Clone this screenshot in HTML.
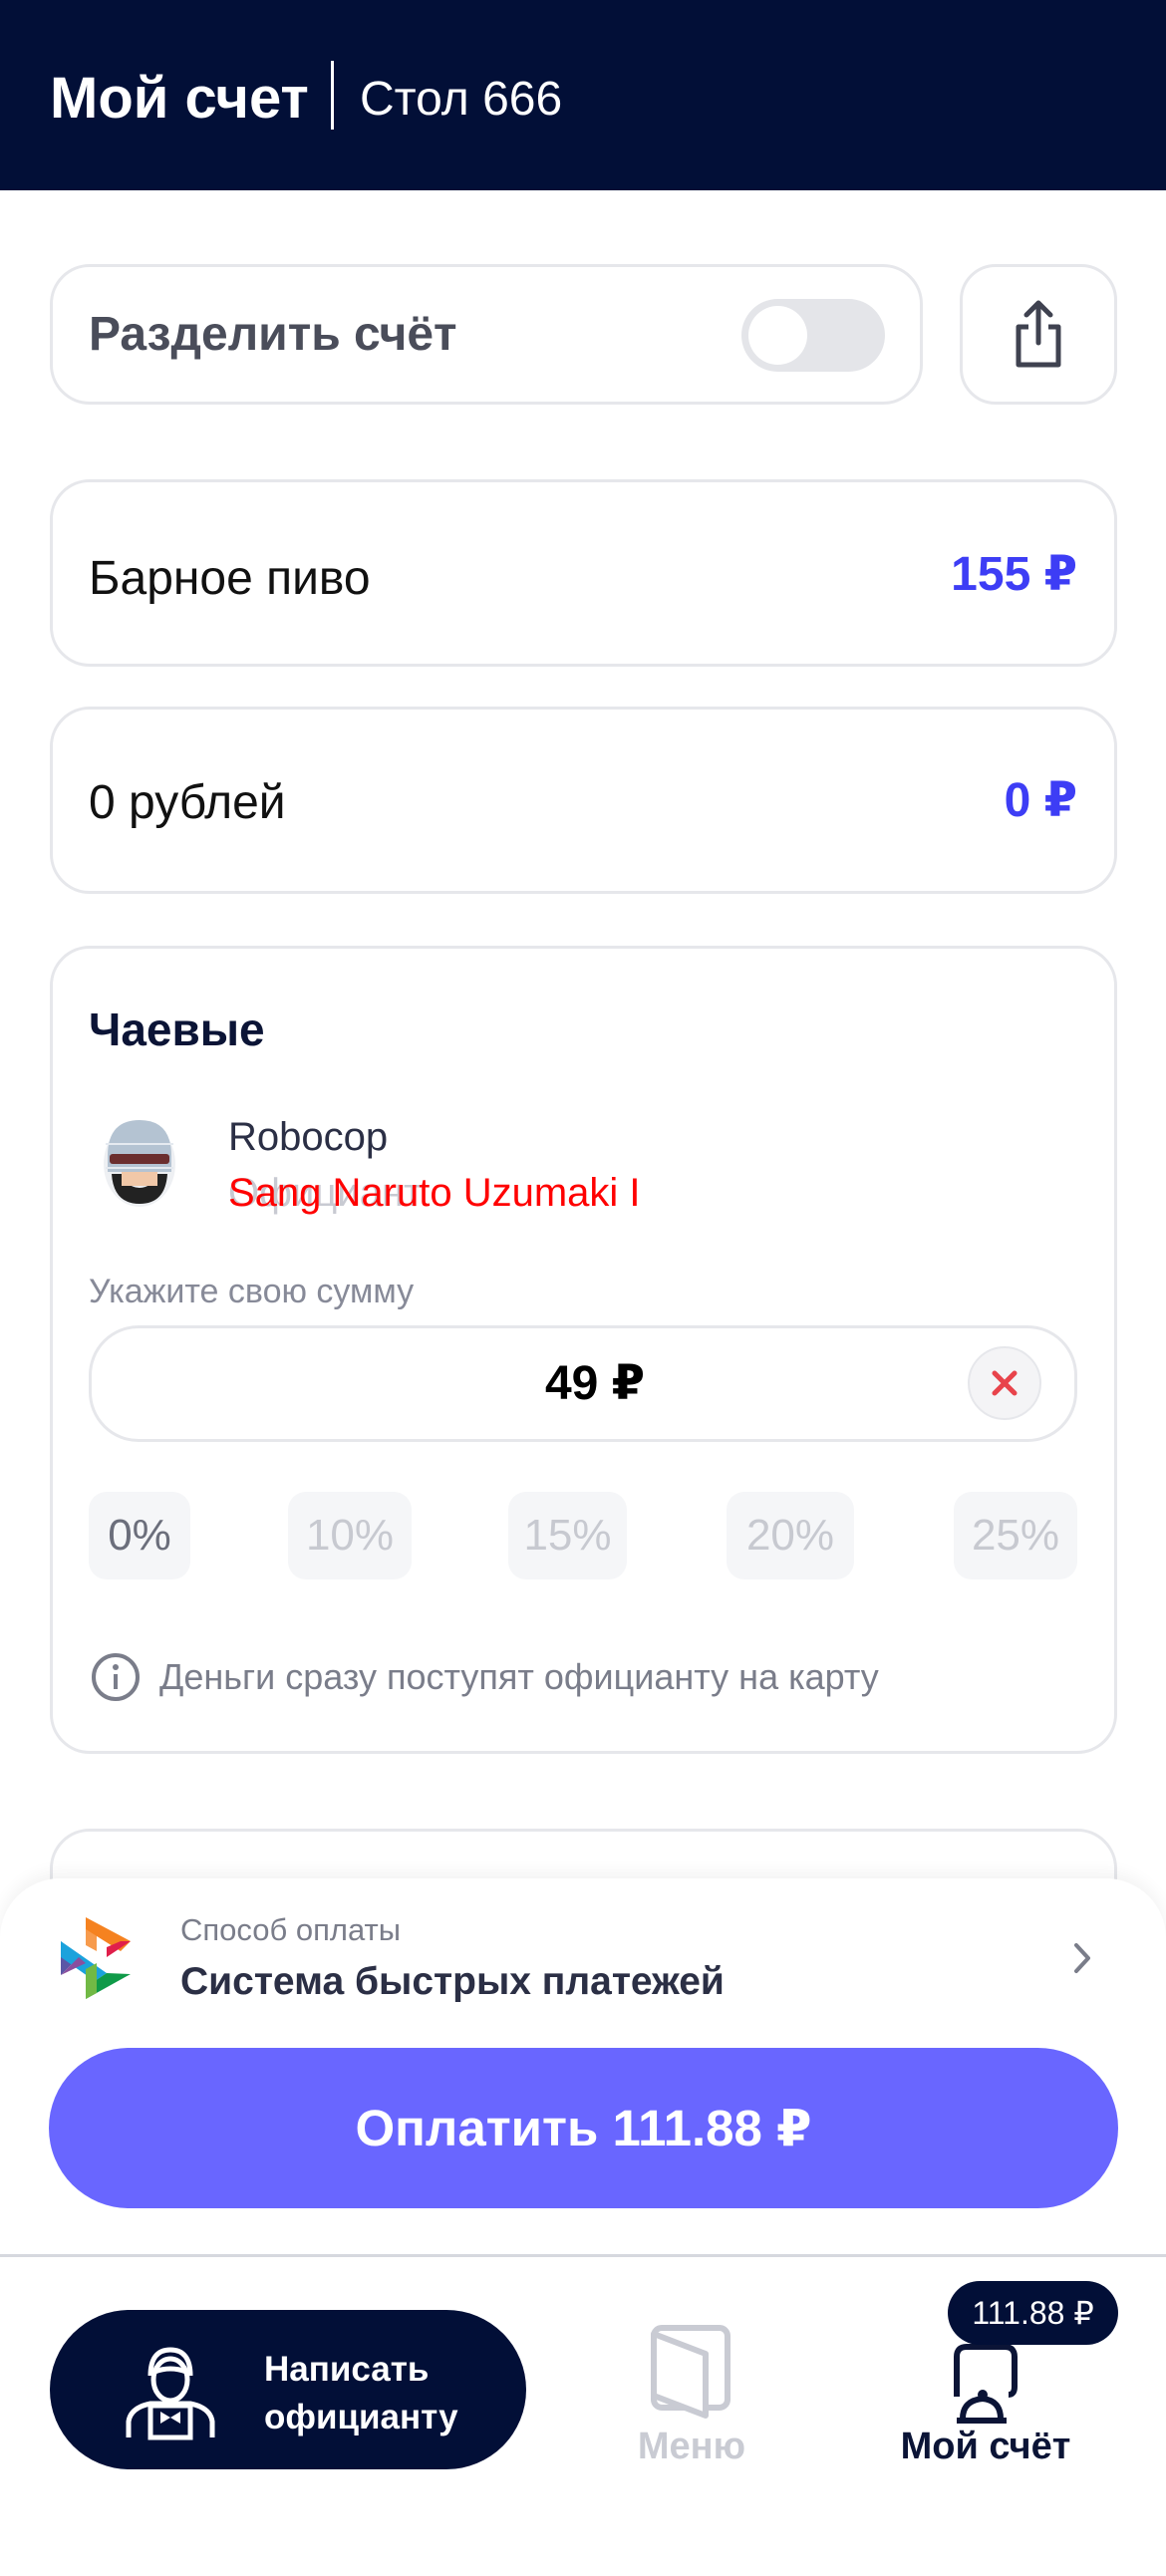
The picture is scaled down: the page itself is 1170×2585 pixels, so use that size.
<!DOCTYPE html>
<html><head><meta charset="utf-8">
<style>
*{margin:0;padding:0;box-sizing:border-box}
body{width:1170px;height:2532px;background:#fff;font-family:"Liberation Sans","DejaVu Sans",sans-serif;position:relative;overflow:hidden}
.a{position:absolute}
.card{position:absolute;border:3px solid #e6e7eb;border-radius:40px;background:#fff}
.t{position:absolute;white-space:nowrap;line-height:1}
.chip{position:absolute;top:1497px;height:88px;background:#f5f6f8;border-radius:18px;display:flex;align-items:center;justify-content:center;font-size:44px;color:#c7c9d0}
</style></head><body>
<div class="a" style="left:0;top:0;width:1170px;height:191px;background:#020f37"></div>
<div class="t" style="left:50px;top:70px;font-size:58px;font-weight:bold;color:#fff">Мой счет</div>
<div class="a" style="left:332px;top:61px;width:3px;height:69px;background:#fff"></div>
<div class="t" style="left:361px;top:76px;font-size:48px;color:#fff">Стол 666</div>

<div class="card" style="left:50px;top:265px;width:876px;height:141px"></div>
<div class="t" style="left:89px;top:312px;font-size:48px;font-weight:bold;color:#4a4d5a">Разделить счёт</div>
<div class="a" style="left:744px;top:300px;width:144px;height:73px;border-radius:37px;background:#e4e5e9"></div>
<div class="a" style="left:751px;top:307px;width:59px;height:59px;border-radius:50%;background:#fff"></div>
<div class="card" style="left:963px;top:265px;width:158px;height:141px;border-radius:36px"></div>
<svg class="a" style="left:1010px;top:300px" width="64" height="72" viewBox="0 0 64 72"><path d="M22 28H12v38h40V28H42" fill="none" stroke="#3f4250" stroke-width="5" stroke-linejoin="round"/><path d="M32 44V5M20 16L32 4l12 12" fill="none" stroke="#3f4250" stroke-width="5" stroke-linecap="round" stroke-linejoin="round"/></svg>

<div class="card" style="left:50px;top:481px;width:1071px;height:188px"></div>
<div class="t" style="left:89px;top:557px;font-size:48px;color:#111">Барное пиво</div>
<div class="t" style="right:89px;top:553px;font-size:48px;color:#3d3df5;font-weight:bold">155 ₽</div>
<div class="card" style="left:50px;top:709px;width:1071px;height:188px"></div>
<div class="t" style="left:89px;top:782px;font-size:48px;color:#111">0 рублей</div>
<div class="t" style="right:89px;top:780px;font-size:48px;color:#3d3df5;font-weight:bold">0 ₽</div>

<div class="card" style="left:50px;top:949px;width:1071px;height:811px"></div>
<div class="card" style="left:50px;top:1835px;width:1071px;height:200px"></div>
<div class="t" style="left:89px;top:1010px;font-size:46px;font-weight:bold;color:#0b1436">Чаевые</div>
<svg class="a" style="left:100px;top:1120px" width="80" height="92" viewBox="0 0 80 92"><ellipse cx="40" cy="48" rx="36" ry="43" fill="#eef0f3"/><path d="M8 40Q8 4 40 4Q72 4 72 40V56H8Z" fill="#b4c3d2"/><path d="M6 28h68M6 52h68" stroke="#e5eaf0" stroke-width="2"/><rect x="10" y="38" width="60" height="10" rx="3" fill="#6b2e2e"/><path d="M12 58Q14 88 40 88Q66 88 68 58H58Q52 72 40 72Q28 72 22 58Z" fill="#222"/><rect x="22" y="56" width="36" height="14" fill="#f1c8a8"/></svg>
<div class="t" style="left:229px;top:1121px;font-size:40px;color:#2b2f45">Robocop</div>
<div class="t" style="left:229px;top:1177px;font-size:40px;color:#c8cad2">Официант</div>
<div class="t" style="left:229px;top:1177px;font-size:40px;color:#f00">Sang Naruto Uzumaki I</div>

<div class="t" style="left:89px;top:1279px;font-size:34px;color:#878a98">Укажите свою сумму</div>
<div class="a" style="left:89px;top:1330px;width:992px;height:117px;border:3px solid #e6e7eb;border-radius:50px"></div>
<div class="t" style="left:0;width:1194px;text-align:center;top:1365px;font-size:48px;font-weight:bold;color:#000">49 ₽</div>
<div class="a" style="left:971px;top:1351px;width:74px;height:74px;border-radius:50%;background:#f4f4f6;border:2px solid #e6e7eb"></div>
<svg class="a" style="left:994px;top:1374px" width="28" height="28"><path d="M4 4L24 24M24 4L4 24" stroke="#e8434b" stroke-width="5" stroke-linecap="round"/></svg>

<div class="chip" style="left:89px;width:102px;color:#6b6e7b">0%</div>
<div class="chip" style="left:289px;width:124px">10%</div>
<div class="chip" style="left:510px;width:119px">15%</div>
<div class="chip" style="left:729px;width:128px">20%</div>
<div class="chip" style="left:957px;width:124px">25%</div>

<svg class="a" style="left:91px;top:1658px" width="50" height="50"><circle cx="25" cy="25" r="22" fill="none" stroke="#7a7d8a" stroke-width="4"/><circle cx="25" cy="15" r="3" fill="#7a7d8a"/><path d="M25 22v15" stroke="#7a7d8a" stroke-width="4"/></svg>
<div class="t" style="left:160px;top:1665px;font-size:36px;color:#7a7d8a">Деньги сразу поступят официанту на карту</div>

<div class="a" style="left:0;top:1885px;width:1170px;height:700px;background:#fff;border-radius:60px 60px 0 0;box-shadow:0 -6px 16px rgba(0,0,0,0.05)"></div>
<svg class="a" style="left:61px;top:1924px" width="70" height="82" viewBox="0 0 70 82"><path d="M0 24L18 40 0 58Z" fill="#5b57a6"/><path d="M0 24L46 56 34 64 0 40Z" fill="#1ba2dc"/><path d="M25 0L70 24 60 34 25 12Z" fill="#f58220"/><path d="M70 24L46 40 46 30 60 24Z" fill="#e01f4b"/><path d="M25 0V28L36 34V12Z" fill="#f58220" opacity=".8"/><path d="M70 57L25 82V70L46 56Z" fill="#0f9a48"/><path d="M25 52V82L36 76V46Z" fill="#71b945"/><path d="M0 58L18 40 25 46 0 58Z" fill="#8a4f9e"/></svg>
<div class="t" style="left:181px;top:1921px;font-size:31px;color:#7a7d8a">Способ оплаты</div>
<div class="t" style="left:181px;top:1969px;font-size:39px;color:#2b2f45;font-weight:bold">Система быстрых платежей</div>
<svg class="a" style="left:1075px;top:1948px" width="22" height="34"><path d="M5 4L17 17 5 30" fill="none" stroke="#7a7d8a" stroke-width="4" stroke-linecap="round" stroke-linejoin="round"/></svg>
<div class="a" style="left:49px;top:2055px;width:1073px;height:161px;border-radius:81px;background:#6966ff;color:#fff;font-size:51px;font-weight:bold;display:flex;align-items:center;justify-content:center">Оплатить 111.88 ₽</div>

<div class="a" style="left:0;top:2262px;width:1170px;height:3px;background:#d6d8de"></div>
<div class="a" style="left:50px;top:2318px;width:478px;height:160px;border-radius:80px;background:#020f37"></div>
<svg class="a" style="left:123px;top:2350px" width="96" height="100" viewBox="0 0 96 100"><path d="M28 34Q28 8 48 8Q68 8 68 34" fill="none" stroke="#fff" stroke-width="5"/><ellipse cx="48" cy="38" rx="17" ry="21" fill="none" stroke="#fff" stroke-width="5"/><path d="M32 30Q48 24 64 30" fill="none" stroke="#fff" stroke-width="5"/><path d="M6 96V80Q8 66 28 62H68Q88 66 90 80V96" fill="none" stroke="#fff" stroke-width="5"/><rect x="28" y="64" width="40" height="32" fill="none" stroke="#fff" stroke-width="5"/><path d="M38 70L48 76 58 70V82L48 76 38 82Z" fill="#fff"/></svg>
<div class="t" style="left:265px;top:2360px;font-size:35px;font-weight:bold;color:#fff">Написать</div>
<div class="t" style="left:265px;top:2408px;font-size:35px;font-weight:bold;color:#fff">официанту</div>

<svg class="a" style="left:650px;top:2332px" width="86" height="96" viewBox="0 0 86 96"><rect x="6" y="4" width="74" height="80" rx="8" fill="none" stroke="#c9cbd3" stroke-width="6"/><path d="M6 10L58 30V92L6 72Z" fill="#fff" stroke="#c9cbd3" stroke-width="6" stroke-linejoin="round"/></svg>
<div class="t" style="left:594px;width:200px;text-align:center;top:2436px;font-size:38px;font-weight:bold;color:#c9cbd3">Меню</div>

<svg class="a" style="left:950px;top:2345px" width="80" height="90" viewBox="0 0 80 90"><path d="M10 60V20Q10 10 20 10H58Q68 10 68 20V50Q68 58 62 58" fill="none" stroke="#0b1436" stroke-width="6"/><path d="M10 84H60M16 82Q16 64 36 62Q54 64 54 82" fill="none" stroke="#0b1436" stroke-width="6"/><circle cx="36" cy="58" r="5" fill="#0b1436"/></svg>
<div class="a" style="left:951px;top:2289px;width:171px;height:64px;border-radius:32px;background:#020f37;color:#fff;font-size:32px;display:flex;align-items:center;justify-content:center">111.88 ₽</div>
<div class="t" style="left:889px;width:200px;text-align:center;top:2436px;font-size:38px;font-weight:bold;color:#0b1436">Мой счёт</div>
</body></html>
